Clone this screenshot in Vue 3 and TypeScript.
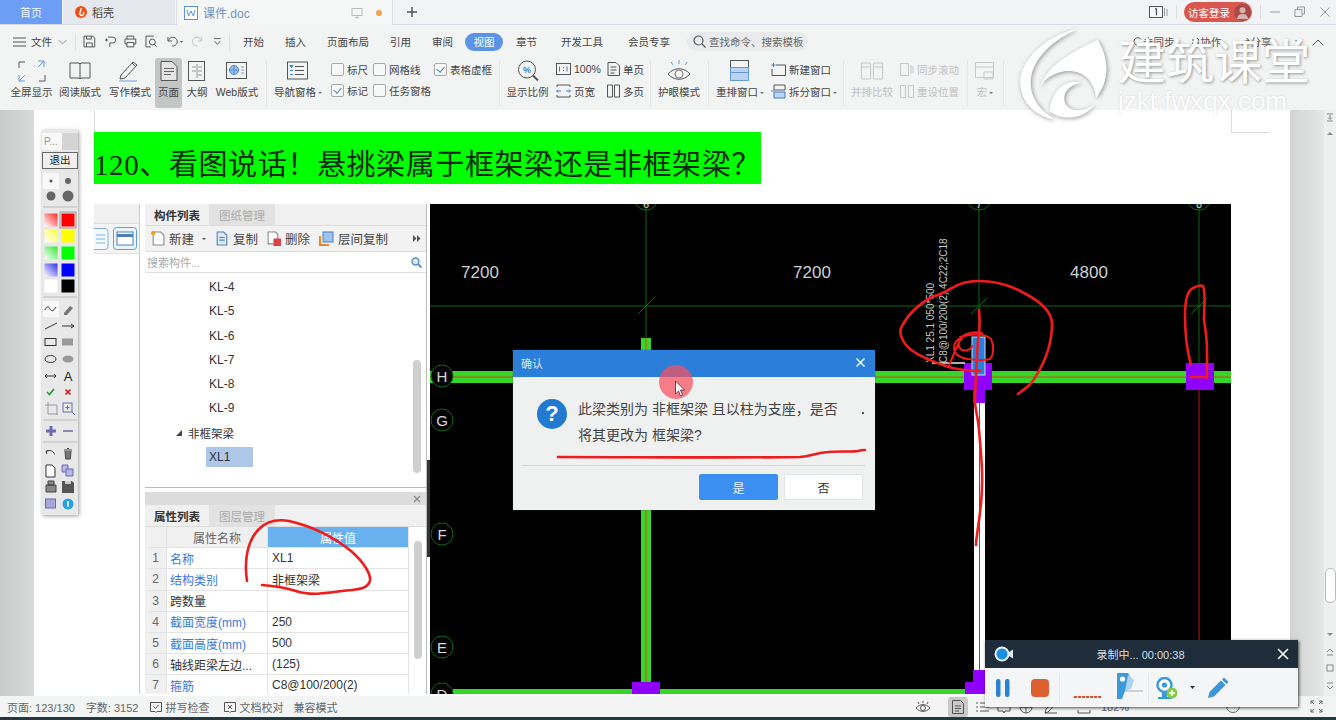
<script setup lang="ts">
// WPS 文字 + 嵌入的 CAD 截图 + 录屏工具条
const treeItems = ['KL-4', 'KL-5', 'KL-6', 'KL-7', 'KL-8', 'KL-9'];

const propRows = [
  { no: 1, name: '名称', value: 'XL1', link: true },
  { no: 2, name: '结构类别', value: '非框架梁', link: true },
  { no: 3, name: '跨数量', value: '', link: false },
  { no: 4, name: '截面宽度(mm)', value: '250', link: true },
  { no: 5, name: '截面高度(mm)', value: '500', link: true },
  { no: 6, name: '轴线距梁左边...', value: '(125)', link: false },
  { no: 7, name: '箍筋', value: 'C8@100/200(2)', link: true }
];

const menuTabs = ['开始', '插入', '页面布局', '引用', '审阅', '视图', '章节', '开发工具', '会员专享'];

const axisLabels = [
  { t: 'H', y: 376 },
  { t: 'G', y: 420 },
  { t: 'F', y: 534 },
  { t: 'E', y: 647 },
  { t: 'D', y: 694 }
];

const swatches = [
  { y: 221, a: '#ff2a2a', b: '#ff0000' },
  { y: 237, a: '#ffff40', b: '#ffff00' },
  { y: 254, a: '#30e830', b: '#00ff00' },
  { y: 271, a: '#3030e8', b: '#0000ff' }
];
</script>

<template>
  <div class="app">
    <header class="tabbar">
      <div class="tab-home">首页</div>
      <div class="tab-shell">
        <svg width="12" height="12" viewBox="0 0 12 12"><circle cx="6" cy="6" r="6" fill="#ee4d14" /><path d="M6.5 2 5 6.5a2 2 0 1 0 3-.6" fill="none" stroke="#fff" stroke-width="1.4" /></svg>
        <span>稻壳</span>
      </div>
      <div class="tab-doc">
        <svg width="14" height="14" viewBox="0 0 14 14"><rect x=".5" y=".5" width="13" height="13" fill="#fff" stroke="#5a94d8" /><path d="M3 4l1.6 6L7 5l2.4 5L11 4" fill="none" stroke="#5a94d8" /></svg>
        <span class="doc-name">课件.doc</span>
        <svg class="doc-screen" width="12" height="12" viewBox="0 0 12 12"><rect x="1" y="1.5" width="10" height="7" fill="none" stroke="#bbb" /><path d="M6 8.5v2M4 10.8h4" stroke="#bbb" /></svg>
        <i class="doc-dot"></i>
      </div>
      <div class="tab-plus">
        <svg width="12" height="12" viewBox="0 0 12 12"><path d="M6 1v10M1 6h10" stroke="#555" stroke-width="1.5" /></svg>
      </div>
      <div class="tab-right">
        <svg width="19" height="12" viewBox="0 0 19 12"><rect x=".5" y=".5" width="13" height="11" fill="#f7f7f7" stroke="#555" /><path d="M15.5 2v8M18 3v7" stroke="#999" /><path d="M6 3.2 7.4 2.4V9.4" fill="none" stroke="#333" /></svg>
        <i class="tab-sep"></i>
        <div class="login-pill">
          <span>访客登录</span>
          <svg width="17" height="17" viewBox="0 0 17 17"><circle cx="8.5" cy="8.5" r="8.5" fill="#a84a48" /><circle cx="8.5" cy="6.2" r="3" fill="#d9b3b0" /><path d="M3 15c.5-4 2.800-5 5.500-5s5 1 5.500 5" fill="#d9b3b0" /></svg>
        </div>
        <i class="tab-sep"></i>
        <svg width="12" height="12" viewBox="0 0 12 12"><path d="M1 6h10" stroke="#999" /></svg>
        <svg class="win" width="12" height="12" viewBox="0 0 12 12"><path d="M3.500 3.500V1h7v7H8M1 3.500h7v7H1z" fill="none" stroke="#999" /></svg>
        <svg class="win" width="12" height="12" viewBox="0 0 12 12"><path d="M1.500 1.500l9 9M10.500 1.500l-9 9" stroke="#999" /></svg>
      </div>
    </header>

    <section class="ribbon">
      <div class="menu-row">
        <svg class="m-burger" width="13" height="10" viewBox="0 0 13 10"><path d="M0 1h13M0 5h13M0 9h13" stroke="#555" /></svg>
        <span class="m-file">文件</span>
        <svg class="m-chev" width="9" height="6" viewBox="0 0 9 6"><path d="M.5 1l4 4 4-4" fill="none" stroke="#999" /></svg>
        <i class="m-sep"></i>
        <div class="quick">
          <svg width="13" height="13" viewBox="0 0 13 13"><path d="M1 1h9l2 2v9H1zM3.500 1v3h5V1M3.500 12V8h6v4" fill="none" stroke="#555" /></svg>
          <svg width="13" height="13" viewBox="0 0 13 13"><path d="M4 2h5a3 3 0 0 1 0 6H6v4M1 5h3M2.500 3.500v3" fill="none" stroke="#555" /></svg>
          <svg width="13" height="13" viewBox="0 0 13 13"><path d="M3 4V1h7v3M3 9H1V4h11v5h-2M3 7.500h7V12H3z" fill="none" stroke="#555" /></svg>
          <svg width="13" height="13" viewBox="0 0 13 13"><path d="M9 1H1v11h5" fill="none" stroke="#555" /><circle cx="7.500" cy="7" r="3" fill="none" stroke="#555" /><path d="M9.700 9.200 12 12" stroke="#555" /></svg>
          <svg width="18" height="13" viewBox="0 0 18 13"><path d="M2 2v4h4M2.500 6A4.500 4.500 0 1 1 6 11" fill="none" stroke="#555" /><path d="M14 6h3.500l-1.750 2z" fill="#777" /></svg>
          <svg width="13" height="13" viewBox="0 0 13 13"><path d="M11 2v4H7M10.500 6A4.500 4.500 0 1 0 7 11" fill="none" stroke="#c4c4c4" /></svg>
          <svg width="11" height="11" viewBox="0 0 11 11"><path d="M2 2.500h7M2.500 5l3 3.500 3-3.500" fill="none" stroke="#666" /></svg>
        </div>
        <i class="m-sep m-sep2"></i>
        <nav class="menu-tabs">
          <span v-for="t in menuTabs" :key="t" class="menu-tab" :class="{ active: t === '视图' }">{{ t }}</span>
        </nav>
        <div class="search-pill">
          <svg width="13" height="13" viewBox="0 0 13 13"><circle cx="5.500" cy="5.500" r="4.500" fill="none" stroke="#555" stroke-width="1.200" /><path d="M9 9l3.500 3.500" stroke="#555" stroke-width="1.200" /></svg>
          <span>查找命令、搜索模板</span>
        </div>
        <div class="share">
          <span class="share-item">
            <svg width="9" height="9" viewBox="0 0 9 9"><path d="M8 2.500A3.800 3.800 0 1 0 8 6.500" fill="none" stroke="#555" /></svg>未同步
          </span>
          <span class="share-item">
            <svg width="9" height="9" viewBox="0 0 9 9"><path d="M1 3h7M6 1l2 2M8 6H1M3 8 1 6" fill="none" stroke="#555" /></svg>协作
          </span>
          <span class="share-item">
            <svg width="9" height="9" viewBox="0 0 9 9"><path d="M1 8c.5-3 3-4.500 7-4.500M5.500 1 8 3.500 5.500 6" fill="none" stroke="#555" /></svg>分享
          </span>
          <span class="share-item">:</span>
        </div>
        <svg class="m-up" width="12" height="7" viewBox="0 0 12 7"><path d="M.5 6.500 6 1l5.500 5.500" fill="none" stroke="#555" /></svg>
      </div>

      <div class="tools-row">
        <div class="views">
          <div class="tool">
            <svg width="28" height="22" viewBox="0 0 28 22"><path d="M1 8V2h6M27 8" fill="none" stroke="#555" /><path d="M20 1h6v6M26 1l-6 6" fill="none" stroke="#5f9ae0" /><path d="M1 15v6h6M1 21l6-6" fill="none" stroke="#5f9ae0" /><path d="M27 15v6h-6" fill="none" stroke="#555" /></svg>
            <span>全屏显示</span>
          </div>
          <div class="tool">
            <svg width="22" height="18" viewBox="0 0 22 18"><path d="M1 1h9l1 1 1-1h9v15H12l-1 1-1-1H1zM11 2v14" fill="none" stroke="#555" /></svg>
            <span>阅读版式</span>
          </div>
          <div class="tool">
            <svg width="24" height="22" viewBox="0 0 24 22"><path d="M3 15 15 2l4 3-12 13-5 1z" fill="none" stroke="#555" /><path d="M14 3l4 4" stroke="#555" /><path d="M1 21h18" stroke="#6b9ee0" /></svg>
            <span>写作模式</span>
          </div>
          <div class="tool tool-active">
            <svg width="18" height="21" viewBox="0 0 18 21"><path d="M1 1h11l5 5v14H1z" fill="#e4e4e4" stroke="#555" /><path d="M4 8h10M4 11h10M4 14h7" stroke="#666" /></svg>
            <span>页面</span>
          </div>
          <div class="tool">
            <svg width="18" height="20" viewBox="0 0 18 20"><rect x=".5" y=".5" width="16" height="19" fill="none" stroke="#555" /><path d="M9 3v14M4 6h4M10 6h4M4 10h4M10 10h4M10 14h4" stroke="#999" /></svg>
            <span>大纲</span>
          </div>
          <div class="tool">
            <svg width="22" height="18" viewBox="0 0 22 18"><rect x=".5" y=".5" width="20" height="16" fill="none" stroke="#555" /><circle cx="8" cy="8" r="4.500" fill="#9dbde8" stroke="#4a86d4" /><path d="M3.500 8h9M8 3.500v9M15 5h3M15 8h3M15 11h3" stroke="#4a86d4" stroke-width=".8" /></svg>
            <span>Web版式</span>
          </div>
        </div>
        <i class="r-sep r-sep-views"></i>
        <div class="tool nav-tool">
          <svg width="22" height="19" viewBox="0 0 22 19"><rect x=".5" y=".5" width="20" height="17" fill="none" stroke="#555" /><path d="M8 5h9M8 9h9M8 13h9" stroke="#555" /><path d="M3 4h3L4.500 6zM3 9h3M3 13h3" stroke="#3c7fd0" fill="#3c7fd0" /></svg>
          <span>导航窗格<b class="caret"></b></span>
        </div>
        <div class="checks">
          <label class="chk"><i class="box"></i>标尺</label>
          <label class="chk"><i class="box"></i>网格线</label>
          <label class="chk"><i class="box on"></i>表格虚框</label>
          <label class="chk"><i class="box on"></i>标记</label>
          <label class="chk"><i class="box"></i>任务窗格</label>
          <span></span>
        </div>
        <i class="r-sep"></i>
        <div class="tool zoom-tool">
          <svg width="22" height="23" viewBox="0 0 22 23"><circle cx="10" cy="10" r="8.500" fill="none" stroke="#555" /><path d="M16 16l5 5" stroke="#555" stroke-width="2" /><text x="10" y="13" class="pct">%</text></svg>
          <span>显示比例</span>
        </div>
        <div class="mini zoom-mini">
          <div class="mini-item">
            <svg width="15" height="12" viewBox="0 0 15 12"><rect x=".5" y=".5" width="14" height="11" fill="none" stroke="#555" /><path d="M3.500 3.500v5M7.500 4v1M7.500 7v1M11 3.500v5" stroke="#3c7fd0" /></svg>
            <span>100%</span>
          </div>
          <div class="mini-item">
            <svg width="13" height="14" viewBox="0 0 13 14"><path d="M1 .5h8l3.500 3.500v9.500H1zM3.500 5h6M3.500 8h6M3.500 11h4" fill="none" stroke="#555" /></svg>
            <span>单页</span>
          </div>
          <div class="mini-item">
            <svg width="15" height="14" viewBox="0 0 15 14"><path d="M1 3V1h13v2M1 11v2h13v-2" fill="none" stroke="#555" /><path d="M1 7h4M14 7h-4M2 5.500 .5 7 2 8.500M13 5.500 14.500 7 13 8.500" fill="none" stroke="#3c7fd0" /></svg>
            <span>页宽</span>
          </div>
          <div class="mini-item">
            <svg width="13" height="14" viewBox="0 0 13 14"><path d="M.5 1h5v12h-5zM7.500 1h5v12h-5z" fill="none" stroke="#555" /></svg>
            <span>多页</span>
          </div>
        </div>
        <i class="r-sep"></i>
        <div class="tool eye-tool">
          <svg width="24" height="24" viewBox="0 0 24 24"><path d="M1 15c6-7 16-7 22 0-6 7-16 7-22 0z" fill="none" stroke="#555" /><circle cx="12" cy="15" r="4" fill="none" stroke="#777" /><path d="M12 1v4M4 3l2 3M20 3l-2 3" stroke="#5f9ae0" /></svg>
          <span>护眼模式</span>
        </div>
        <i class="r-sep r-sep-eye"></i>
        <div class="tool order-tool">
          <svg width="20" height="22" viewBox="0 0 20 22"><rect x=".5" y=".5" width="18" height="7" fill="none" stroke="#555" /><rect x=".5" y="7.500" width="18" height="5" fill="#bcd3f0" stroke="#5f9ae0" /><rect x=".5" y="12.500" width="18" height="8" fill="#bcd3f0" stroke="#5f9ae0" /></svg>
          <span>重排窗口<b class="caret"></b></span>
        </div>
        <div class="mini win-mini">
          <div class="mini-item">
            <svg width="15" height="13" viewBox="0 0 15 13"><path d="M5 2h9.500v10.500H1V6" fill="none" stroke="#555" /><path d="M2.500 0v4M.5 2h4" stroke="#3c7fd0" /></svg>
            <span>新建窗口</span>
          </div>
          <div class="mini-item">
            <svg width="15" height="15" viewBox="0 0 15 15"><path d="M3 1h11v5H3z" fill="none" stroke="#555" /><path d="M3 8h11v6H3z" fill="#bcd3f0" stroke="#3c7fd0" /><path d="M0 7h3" stroke="#3c7fd0" /></svg>
            <span>拆分窗口<b class="caret"></b></span>
          </div>
        </div>
        <i class="r-sep"></i>
        <div class="tool off compare-tool">
          <svg width="22" height="18" viewBox="0 0 22 18"><path d="M.5 1h9v16h-9zM12.500 1h9v16h-9zM.5 5h9M12.500 5h9" fill="none" stroke="#c8c8c8" /></svg>
          <span>并排比较</span>
        </div>
        <div class="mini off sync-mini">
          <div class="mini-item">
            <svg width="14" height="13" viewBox="0 0 14 13"><path d="M.5.500h8v12h-8zM11 2v9M13 3v7" fill="none" stroke="#c8c8c8" /></svg>
            <span>同步滚动</span>
          </div>
          <div class="mini-item">
            <svg width="14" height="13" viewBox="0 0 14 13"><path d="M.5.500h5v12h-5zM8.500.500h5v12h-5z" fill="none" stroke="#c8c8c8" /></svg>
            <span>重设位置</span>
          </div>
        </div>
        <i class="r-sep"></i>
        <div class="tool off macro-tool">
          <svg width="20" height="18" viewBox="0 0 20 18"><path d="M.5.500h18v15H.5zM.5 5h18M9 10h9v7H9z" fill="#f4f5f5" stroke="#c8c8c8" /></svg>
          <span>宏<b class="caret"></b></span>
        </div>
        <i class="r-sep r-sep-macro"></i>
      </div>
    </section>

    <main class="workspace">
      <div class="gutter"></div>
      <div class="page">
        <div class="crop-marks">
          <i class="crop-left"></i>
          <i class="crop-right"></i>
        </div>
        <h1 class="heading">120、看图说话！悬挑梁属于框架梁还是非框架梁？</h1>
        <div class="shot">
          <div class="sliver">
            <div class="sliver-head"></div>
            <div class="sliver-btns">
              <svg width="15" height="22" viewBox="0 0 15 22"><rect x="-6" y=".5" width="20" height="21" rx="3" fill="#f4f8fd" stroke="#7db0e8" /><path d="M2 7h9M2 11h9M2 15h9" stroke="#7db0e8" /></svg>
              <svg width="24" height="23" viewBox="0 0 24 23"><rect x=".5" y=".5" width="23" height="22" rx="3" fill="#eaf3fc" stroke="#5d9de0" /><rect x="4" y="5" width="16" height="13" fill="#fff" stroke="#4c7fb8" /><path d="M4 8.500h16" stroke="#4c7fb8" stroke-width="3" /></svg>
            </div>
          </div>
          <div class="panels">
            <div class="panel-list">
              <div class="sub-tabs">
                <span class="sub-tab active">构件列表</span>
                <span class="sub-tab">图纸管理</span>
              </div>
              <div class="list-toolbar">
                <span class="lt-item">
                  <svg width="14" height="15" viewBox="0 0 13 14"><path d="M2 1h7l3 3v9H2z" fill="#fff" stroke="#888" /><circle cx="2" cy="2" r="2" fill="#e8a030" /></svg>新建<b class="caret dark"></b>
                </span>
                <span class="lt-item">
                  <svg width="14" height="15" viewBox="0 0 13 14"><path d="M2 1h6l3 3v9H2z" fill="#dce9f8" stroke="#4a80bd" /><path d="M4 6h5M4 8.500h5" stroke="#4a80bd" /></svg>复制
                </span>
                <span class="lt-item">
                  <svg width="14" height="15" viewBox="0 0 13 14"><path d="M1 1h7l2 2v9H1z" fill="#fff" stroke="#888" /><rect x="6" y="7" width="7" height="7" fill="#d8434a" /></svg>删除
                </span>
                <span class="lt-item">
                  <svg width="15" height="15" viewBox="0 0 15 15"><path d="M1 5v9h9" fill="none" stroke="#e8862a" stroke-width="2" /><rect x="4" y="1" width="10" height="10" fill="#9dc3ee" stroke="#4a80bd" /></svg>层间复制
                </span>
                <svg class="lt-more" width="8" height="7" viewBox="0 0 8 7"><path d="M0 0l3.500 3.500L0 7zM4 0l3.500 3.500L4 7z" fill="#555" /></svg>
              </div>
              <div class="list-search">
                <span>搜索构件...</span>
                <svg width="11" height="11" viewBox="0 0 11 11"><circle cx="4.500" cy="4.500" r="3.500" fill="#d8e8f8" stroke="#5d8fc4" stroke-width="1.400" /><path d="M7 7l3.500 3.500" stroke="#5d8fc4" stroke-width="1.800" /></svg>
              </div>
              <div class="tree">
                <div v-for="item in treeItems" :key="item" class="tree-leaf">{{ item }}</div>
                <div class="tree-group"><svg width="6" height="6" viewBox="0 0 6 6"><path d="M6 0v6H0z" fill="#444" /></svg>非框架梁</div>
                <div class="tree-leaf selected">XL1</div>
                <i class="tree-scroll"></i>
              </div>
            </div>
            <div class="panel-props">
              <div class="props-head">
                <svg width="8" height="8" viewBox="0 0 8 8"><path d="M1 1l6 6M7 1 1 7" stroke="#888" stroke-width="1.300" /></svg>
              </div>
              <div class="sub-tabs">
                <span class="sub-tab active">属性列表</span>
                <span class="sub-tab">图层管理</span>
              </div>
              <div class="prop-table">
                <div class="cell head"></div>
                <div class="cell head">属性名称</div>
                <div class="cell head value-head">属性值</div>
                <template v-for="r in propRows" :key="r.no">
                  <div class="cell num">{{ r.no }}</div>
                  <div class="cell name" :class="{ link: r.link }">{{ r.name }}</div>
                  <div class="cell val">{{ r.value }}</div>
                </template>
                <i class="prop-scroll"></i>
              </div>
            </div>
          </div>
          <i class="panel-splitter"></i>
          <svg class="cad" width="801" height="490" viewBox="430 204 801 490">
            <rect x="430" y="204" width="801" height="490" fill="#000" />
            <g stroke="#0f6a12" fill="none">
              <path d="M646 204v134M979 204v160M1199 204v160M430 306h801" />
              <circle cx="646" cy="198" r="12" />
              <circle cx="979" cy="198" r="12" />
              <circle cx="1199" cy="198" r="12" />
              <path d="M638 314l16-16M971 314l16-16M1191 314l16-16" />
            </g>
            <g class="cad-axis-top">
              <text x="646" y="208">6</text>
              <text x="979" y="208">7</text>
              <text x="1199" y="208">8</text>
            </g>
            <rect x="641" y="338" width="10" height="350" fill="#35d52a" />
            <path d="M646 338v350" stroke="#a07a18" stroke-width="1.500" />
            <rect x="430" y="371" width="801" height="12" fill="#35d52a" />
            <path d="M430 377h801" stroke="#8f7a1c" stroke-width="1.500" />
            <rect x="453" y="689" width="522" height="5" fill="#35d52a" />
            <g v-for="a in axisLabels" :key="a.t">
              <circle cx="442" :cy="a.y" r="11" fill="#000" stroke="#0f6a12" />
              <text class="cad-axis" x="442" :y="a.y + 6">{{ a.t }}</text>
            </g>
            <rect x="974" y="403" width="11" height="291" fill="#fff" />
            <path d="M979.500 403v291" stroke="#e02020" />
            <path d="M1199 390v304" stroke="#7a1010" stroke-width="1.500" />
            <path d="M964 363h28v27h-7v13h-12v-13h-9zM1186 363h28v27h-28zM632 682h28v12h-28zM965 682h8v-12h12v24h-20z" fill="#8f00ff" />
            <rect x="972" y="337" width="13" height="38" fill="#2a7fe0" stroke="#d8d8f0" />
            <path d="M932 363h33" stroke="#e8e8e8" stroke-width="1.500" />
            <text class="cad-dim" x="480" y="278">7200</text>
            <text class="cad-dim" x="812" y="278">7200</text>
            <text class="cad-dim" x="1089" y="278">4800</text>
            <text class="cad-note" transform="translate(934 363) rotate(-90)">XL1 25.1 050*500</text>
            <text class="cad-note" transform="translate(947 363) rotate(-90)">C8@100/200(2) 4C22;2C18</text>
          </svg>
        </div>
      </div>
      <aside class="side">
        <div class="side-shade"></div>
        <div class="vscroll">
          <svg width="8" height="30" viewBox="0 0 8 30"><path d="M1 1h6M4 2v4M2 4.500l2 2 2-2M1 8h6" stroke="#888" fill="none" /><path d="M1 22h6L4 19z" fill="#888" /></svg>
          <i class="vthumb"></i>
          <svg width="8" height="60" viewBox="0 0 8 60"><path d="M1 2h6L4 5z" fill="#888" /><path d="M1 21l3-3 3 3M1 24h6" stroke="#888" fill="none" /><rect x="1" y="34" width="6" height="6" fill="none" stroke="#888" /><path d="M1 52h6M1 55l3 3 3-3" stroke="#888" fill="none" /></svg>
        </div>
      </aside>
    </main>

    <footer class="statusbar">
      <span class="st-page">页面: 123/130</span>
      <span class="st-words">字数: 3152</span>
      <span class="st-check">
        <svg width="12" height="12" viewBox="0 0 12 12"><path d="M.5 1.500h11v9H7l-1 1-1-1H.5zM3.500 5.500 5.500 7.500l3-3.500" fill="none" stroke="#555" /></svg>拼写检查
      </span>
      <span class="st-check st-proof">
        <svg width="12" height="12" viewBox="0 0 12 12"><path d="M.5 1.500h11v9H7l-1 1-1-1H.5zM4 4l4 4M8 4 4 8" fill="none" stroke="#555" /></svg>文档校对
      </span>
      <span class="st-compat">兼容模式</span>
      <div class="st-right">
        <svg width="16" height="14" viewBox="0 0 16 14"><path d="M1 8c4-4.500 10-4.500 14 0-4 4.500-10 4.500-14 0z" fill="none" stroke="#555" /><circle cx="8" cy="8" r="2.500" fill="none" stroke="#555" /><path d="M8 1v2M3 2l1 2M13 2l-1 2" stroke="#555" /></svg>
        <span class="st-page-btn"><svg width="12" height="14" viewBox="0 0 12 14"><path d="M.5.500h8l3 3v10H.5zM3 6h6M3 8.500h6M3 11h4" fill="none" stroke="#555" /></svg></span>
        <svg class="st-list" width="13" height="12" viewBox="0 0 13 12"><path d="M0 2h2M4 2h9M0 6h2M4 6h9M0 10h2M4 10h9" stroke="#555" /></svg>
        <svg width="14" height="14" viewBox="0 0 14 14"><path d="M1 2h5l1 1 1-1h5v9H8l-1 2-1-2H1z" fill="none" stroke="#555" /></svg>
        <svg width="14" height="14" viewBox="0 0 14 14"><circle cx="7" cy="7" r="6" fill="none" stroke="#555" /><path d="M1 7h12M7 1v12" stroke="#555" /></svg>
        <svg class="st-pen" width="14" height="14" viewBox="0 0 14 14"><path d="M1 13l1-4 8-7 2 2-8 8zM1 13h12" fill="none" stroke="#555" /></svg>
        <svg class="st-crop" width="14" height="14" viewBox="0 0 14 14"><path d="M1 4V1h12v3M1 10v3h12v-3" fill="none" stroke="#555" /></svg>
        <span class="st-zoom">182%</span>
      </div>
      <span class="st-circle"></span>
      <svg class="st-full" width="13" height="13" viewBox="0 0 13 13"><path d="M1 4V1h3M9 1h3v3M1 9v3h3M12 9v3H9M1 1l3 3M12 1 9 4M1 12l3-3M12 12 9 9" fill="none" stroke="#666" /></svg>
    </footer>
    <div class="edge"></div>

    <!-- 浮层 -->
    <div class="pen-bar">
      <div class="pen-title"><span>P...</span><i></i></div>
      <div class="pen-exit">退出</div>
      <svg width="36" height="344" viewBox="42 172 36 344">
        <rect x="43" y="174" width="16" height="16" fill="#f8f8f8" />
        <circle cx="51" cy="182" r="1.500" fill="#555" />
        <circle cx="68" cy="182" r="3" fill="#666" />
        <circle cx="51" cy="197" r="4.500" fill="#666" />
        <circle cx="68" cy="197" r="5.500" fill="#666" />
        <path d="M43 208h34M43 298h34M43 421h34M43 443h34" stroke="#bbb" />
        <defs>
          <linearGradient v-for="(s, i) in swatches" :id="'sw' + i" :key="s.y" x1="1" y1="0" x2="0" y2="1">
            <stop offset="0" :stop-color="s.a" />
            <stop offset="1" stop-color="#fff" />
          </linearGradient>
        </defs>
        <g v-for="(s, i) in swatches" :key="s.y">
          <rect x="44.500" :y="s.y - 6.500" width="13" height="13" :fill="`url(#sw${i})`" />
          <rect x="61.500" :y="s.y - 6.500" width="13" height="13" :fill="s.b" />
        </g>
        <rect x="60" y="213" width="16" height="16" fill="none" stroke="#999" />
        <rect x="44.500" y="280.500" width="13" height="13" fill="#fff" />
        <rect x="61.500" y="280.500" width="13" height="13" fill="#000" />
        <rect x="43" y="302" width="16" height="16" fill="#f8f8f8" />
        <path d="M45 311c2-5 4-3 5-1s3 3 6-2" fill="none" stroke="#333" />
        <path d="M64 314l6-7 3 2-6 7h-3z" fill="#777" />
        <path d="M45 330l12-6" stroke="#333" />
        <path d="M62 327h12M71 325l3 2-3 2" fill="none" stroke="#333" />
        <rect x="45" y="339.500" width="11" height="7" fill="none" stroke="#333" />
        <rect x="62" y="339.500" width="11" height="7" fill="#999" />
        <ellipse cx="50.500" cy="360" rx="5.500" ry="3.500" fill="none" stroke="#333" />
        <ellipse cx="68" cy="360" rx="5.500" ry="3.500" fill="#999" />
        <path d="M45 377h11M47 375l-2 2 2 2M54 375l2 2-2 2" fill="none" stroke="#333" />
        <text x="68" y="382" class="pen-a">A</text>
        <path d="M47 393l2.500 2.500L54 390" fill="none" stroke="#1b9a2a" stroke-width="1.600" />
        <path d="M65.500 390.500l5 5M70.500 390.500l-5 5" stroke="#d01818" stroke-width="1.600" />
        <path d="M45 406h12v10M48 403v12h10" fill="none" stroke="#999" />
        <rect x="63" y="404" width="9" height="9" fill="none" stroke="#6a6ab0" />
        <path d="M65.500 408.500h4M67.500 406.500v4M72 413l3 3" stroke="#6a6ab0" />
        <path d="M51 427v10M46 432h10" stroke="#6a6ab0" stroke-width="3" />
        <path d="M63 432h10" stroke="#8a8ab8" stroke-width="2" />
        <path d="M47 455l-1-3 3-.5M46.500 452.500c3-2 7-1 8 3" fill="none" stroke="#444" />
        <path d="M64 451h8M65 452l.7 8h4.600l.7-8M67 449.500h2" fill="#777" stroke="#444" />
        <path d="M46 466h6l3 3v9h-9z" fill="#fff" stroke="#333" />
        <path d="M62 466h6v7h-6z" fill="#b6b6e0" stroke="#6a6ab0" /><path d="M66 470h7v7h-7z" fill="#b6b6e0" stroke="#6a6ab0" />
        <path d="M46 486h10v7H46zM48 482h6v4h-6z" fill="#888" stroke="#444" />
        <path d="M62 482h10l2 2v10H62z" fill="#555" /><rect x="65" y="482" width="6" height="3" fill="#ccc" />
        <rect x="45.500" y="500" width="10" height="9" fill="#a8a8d8" stroke="#6a6ab0" />
        <circle cx="68" cy="505" r="5.500" fill="#2aa0e0" /><path d="M68 502v6" stroke="#fff" stroke-width="1.400" />
      </svg>
    </div>

    <div class="watermark">
      <svg class="wm-logo" width="97" height="93" viewBox="160 90 290 280">
        <path d="M345 92C250 110 165 190 172 260c4 55 43 95 103 105-50-30-80-75-70-130 10-55 65-110 140-143z" fill="#fff" />
        <path d="M405 125c-55 25-165 80-173 145 8-30 58-55 98-50 40 5 65 35 70 80 30-35 50-100 5-175z" fill="#fff" />
        <path d="M260 340c5-60 50-100 95-85-35 5-55 30-50 55 10 35 55 35 90 10-25 40-95 55-135 20z" fill="#fff" />
      </svg>
      <div class="wm-text">
        <div class="wm-cn">建筑课堂</div>
        <div class="wm-en">jzkt.fwxqx.com</div>
      </div>
    </div>

    <div class="dialog">
      <div class="dialog-head">
        <span>确认</span>
        <svg width="9" height="9" viewBox="0 0 9 9"><path d="M.5.500l8 8M8.500.500l-8 8" stroke="#fff" stroke-width="1.400" /></svg>
      </div>
      <div class="dialog-body">
        <div class="q-icon">?</div>
        <div class="dialog-msg">
          <p>此梁类别为 非框架梁 且以柱为支座，是否</p>
          <p>将其更改为 框架梁?</p>
        </div>
        <i class="stray-dot"></i>
      </div>
      <div class="dialog-foot">
        <button class="btn-yes">是</button>
        <button class="btn-no">否</button>
      </div>
    </div>

    <svg class="ink" width="1336" height="720" viewBox="0 0 1336 720">
      <circle cx="676" cy="382" r="17" fill="#f85060" fill-opacity=".72" />
      <path d="M675.500 381v13l3-3 2 5 2-1-2-5h4z" fill="#fff" stroke="#333" stroke-width=".8" />
      <g fill="none" stroke="#ee1c1c" stroke-width="2.600" stroke-linecap="round" stroke-linejoin="round">
        <path d="M558 457c60 0 180 1 242 0 12-1 14-4 28-5 10-1 26 0 30-1 3-1 5-1 7-1" />
        <path d="M247 581c-3-20 0-40 12-52 8-8 18-10 30-8 22 5 42 14 62 30 14 12 20 24 19 30-3 8-10 8-28 10-14 2-32 5-46 0-12-4-20-5-34-6" />
        <path d="M1018 394c8-6 14-10 18-18 10-16 16-34 16-52 0-14-14-24-30-32-14-8-28-11-44-11-10 0-18 2-26 7-8 4-12 7-18 8-10 5-24 15-32 30-4 6 0 16 8 23 10 8 26 14 42 19 10 2 20 3 28 3" />
        <path d="M979 310c1 10 1 20-1 30-1 14-2 30-3 60 0 10 3 16 4 30 2 24 4 40 3 55 0 25-6 50-6 60" />
        <path d="M949 366c3-8 7-18 12-28 3-5 14-7 21-5M962 338c-4 1-8 4-8 10 0 6 6 10 14 11 8 1 15 2 22 0 4-4 4-14 1-20-4-4-13-5-22-4-3 1-5 1-9 2M962 339c-5 3-4 9 0 11 4 1 9 0 10-4" stroke-width="2" />
        <path d="M1191 365c-4-14-6-34-6-50 0-14 2-24 8-27 4-2 8-3 10-2 3 6 1 20 1 34 2 12 3 20 3 30v28M1191 377h14" />
      </g>
    </svg>

    <div class="recorder">
      <div class="rec-head">
        <svg class="rec-cam" width="20" height="16" viewBox="0 0 20 16"><circle cx="8" cy="8" r="7.500" fill="#e8f4fc" /><circle cx="8" cy="8" r="5.500" fill="#1c8fe0" /><path d="M15 6l4-2.500v9L15 10z" fill="#d8ecf8" /></svg>
        <span class="rec-time">录制中... 00:00:38</span>
        <svg width="12" height="12" viewBox="0 0 12 12"><path d="M1 1l10 10M11 1 1 11" stroke="#fff" stroke-width="1.600" /></svg>
      </div>
      <div class="rec-body">
        <svg width="14" height="18" viewBox="0 0 14 18"><rect x="0" y="0" width="4.500" height="18" rx="2" fill="#2a82d0" /><rect x="9" y="0" width="4.500" height="18" rx="2" fill="#2a82d0" /></svg>
        <i class="rec-stop"></i>
        <i class="rec-div"></i>
        <svg class="rec-line" width="27" height="4" viewBox="0 0 27 4"><path d="M0 2h27" stroke="#d8502a" stroke-width="2.200" stroke-dasharray="3 1" /></svg>
        <svg class="rec-mark" width="28" height="28" viewBox="0 0 28 28"><path d="M1 1h11l3 5v9l-6 4-3 8H1z" fill="#3c9ad8" /><path d="M12 3l6 5-3 9-6 2z" fill="#a8d4f0" /><circle cx="6.500" cy="7" r="2.600" fill="#fff" /><path d="M9 19h18" stroke="#999" stroke-width=".8" /></svg>
        <i class="rec-div"></i>
        <svg class="rec-web" width="22" height="22" viewBox="0 0 22 22"><circle cx="8.500" cy="8" r="7" fill="#fff" stroke="#3c9ad8" stroke-width="2.500" /><circle cx="8.500" cy="8" r="2.600" fill="#3c9ad8" /><path d="M2 20h14v2H2zM6 15h5v5H6z" fill="#3c9ad8" /><circle cx="16" cy="16" r="5.500" fill="#86c84a" /><path d="M16 13v6M13 16h6" stroke="#fff" stroke-width="1.400" /></svg>
        <svg class="rec-caret" width="5" height="3" viewBox="0 0 5 3"><path d="M0 0h5L2.500 3z" fill="#333" /></svg>
        <svg class="rec-pen" width="22" height="22" viewBox="0 0 22 22"><path d="M1 21l1.500-6L14 3.500l4.500 4.500L7 19.500z" fill="#3a96d8" /><path d="M15 2.500l2-2 4.500 4.500-2 2z" fill="#3a96d8" /></svg>
      </div>
    </div>
  </div>
</template>

<style scoped>
.app {
  position: relative;
  width: 1336px;
  height: 720px;
  overflow: hidden;
  display: flex;
  flex-direction: column;
  font-family: "Liberation Sans", "Noto Sans CJK SC", sans-serif;
  color: #444;
  font-size: 11px;
}

/* ---- 标签栏 ---- */
.tabbar {
  height: 25px;
  flex: none;
  display: flex;
  align-items: stretch;
  background: #f1f3f5;
  border-bottom: 1px solid #d8dae2;
  box-sizing: border-box;
}
.tab-home {
  width: 62px;
  background: #6c9ef5;
  color: #f0f5ff;
  font-size: 11px;
  display: flex;
  align-items: center;
  justify-content: center;
}
.tab-shell {
  width: 112px;
  margin-left: 1px;
  background: #e5e8ed;
  display: flex;
  align-items: center;
  gap: 5px;
  padding-left: 12px;
  box-sizing: border-box;
}
.tab-doc {
  width: 217px;
  margin-left: 1px;
  margin-bottom: -1px;
  background: #f5f6f6;
  border-left: 1px solid #dcdee4;
  border-right: 1px solid #dcdee4;
  display: flex;
  align-items: center;
  padding-left: 7px;
  box-sizing: border-box;
}
.doc-name {
  margin-left: 5px;
  color: #6f94c2;
  font-size: 12px;
}
.doc-screen {
  margin-left: auto;
}
.doc-dot {
  width: 6px;
  height: 6px;
  border-radius: 50%;
  background: #f0a050;
  margin: 0 10px 0 13px;
}
.tab-plus {
  width: 38px;
  display: flex;
  align-items: center;
  justify-content: center;
}
.tab-right {
  margin-left: auto;
  display: flex;
  align-items: center;
}
.tab-sep {
  width: 1px;
  height: 14px;
  background: #ddd;
  margin: 0 8px;
}
.tab-sep:nth-of-type(1) {
  margin-right: 7px;
}
.login-pill {
  width: 68px;
  height: 20px;
  border-radius: 10px;
  background: #d9574f;
  color: #fff;
  font-size: 10.5px;
  display: flex;
  align-items: center;
  justify-content: space-between;
  padding: 0 1px 0 4px;
  box-sizing: border-box;
}
.win {
  margin-left: 13px;
}
.tab-right .win:last-child {
  margin: 0 5px 0 13px;
}

/* ---- 功能区 ---- */
.ribbon {
  height: 85px;
  flex: none;
  background: #f2f3f3;
  box-sizing: border-box;
}
.menu-row {
  height: 33px;
  display: flex;
  align-items: center;
  padding-left: 13px;
  box-sizing: border-box;
  font-size: 10.5px;
}
.m-file {
  margin-left: 5px;
}
.m-chev {
  margin-left: 6px;
}
.m-sep {
  width: 1px;
  height: 18px;
  background: #e2e2e2;
  margin-left: 8px;
}
.m-sep2 {
  margin-left: 6px;
}
.quick {
  width: 140px;
  margin-left: 7px;
  display: flex;
  align-items: center;
  gap: 8px;
}
.menu-tabs {
  display: flex;
  align-items: center;
  margin-left: 13px;
}
.menu-tab {
  margin-right: 21px;
  white-space: nowrap;
}
.menu-tab:nth-child(7) {
  margin-right: 24px;
}
.menu-tab:nth-child(8) {
  margin-right: 25px;
}
.menu-tab.active {
  background: #5b93e6;
  color: #fff;
  height: 18px;
  line-height: 18px;
  width: 38px;
  text-align: center;
  border-radius: 9px;
  margin: 0 13px 0 -9px;
}
.search-pill {
  width: 121px;
  height: 19px;
  margin-left: -4px;
  border-radius: 10px;
  background: #e8eaeb;
  display: flex;
  align-items: center;
  gap: 3px;
  padding-left: 6px;
  box-sizing: border-box;
  color: #666;
  white-space: nowrap;
}
.share {
  margin-left: 325px;
  display: flex;
  color: #555;
  font-size: 10.5px;
  white-space: nowrap;
}
.share-item {
  display: flex;
  align-items: center;
  gap: 1px;
  margin-left: 16px;
}
.share-item:first-child {
  margin-left: 0;
}
.share-item:nth-child(3) {
  margin-left: 19px;
}
.share-item:nth-child(4) {
  margin-left: 23px;
}
.m-up {
  position: absolute;
  left: 1312px;
  top: 39px;
}
.tools-row {
  height: 52px;
  display: flex;
  padding-left: 8px;
}
.views {
  display: grid;
  grid-template-columns: 47px 50px 50px 27px 30px 50px;
}
.tool {
  height: 50px;
  display: flex;
  flex-direction: column;
  align-items: center;
  font-size: 10.5px;
  white-space: nowrap;
}
.tool > svg {
  height: 24px;
  margin-top: 1px;
  flex: none;
}
.tool > span {
  margin-top: 1px;
  line-height: 16px;
}
.tool-active {
  background: #c4c5c5;
  border-radius: 3px;
}
.off {
  color: #c0c0c0;
}
.caret {
  display: inline-block;
  margin-left: 2px;
  vertical-align: middle;
  border: 2.5px solid transparent;
  border-top-color: #777;
  border-bottom: 0;
}
.caret.dark {
  border-top-color: #555;
  margin-left: 4px;
}
.r-sep {
  width: 1px;
  height: 46px;
  background: #e6e6e6;
  margin-top: 2px;
  flex: none;
}
.r-sep-views {
  margin-left: 4px;
}
.nav-tool {
  width: 56px;
  margin-left: 3px;
}
.checks {
  width: 168px;
  margin-left: 5px;
  display: grid;
  grid-template-columns: 42px 61px 65px;
  grid-auto-rows: 21px;
  padding-top: 1px;
  box-sizing: border-box;
  font-size: 10.5px;
}
.chk {
  display: flex;
  align-items: center;
  gap: 3px;
  white-space: nowrap;
}
.box {
  width: 11px;
  height: 11px;
  border: 1px solid #aaa;
  border-radius: 2px;
  background: #f8f8f8;
  position: relative;
}
.box.on::after {
  content: "";
  position: absolute;
  left: 2.500px;
  top: 1px;
  width: 4px;
  height: 6px;
  border: solid #4a80c8;
  border-width: 0 1.500px 1.500px 0;
  transform: rotate(40deg);
}
.zoom-tool {
  width: 41px;
  margin-left: 7px;
}
.pct {
  font-size: 9px;
  text-anchor: middle;
  fill: #3c7fd0;
  font-weight: bold;
}
.mini {
  display: grid;
  grid-auto-rows: 22px;
  font-size: 10.5px;
  white-space: nowrap;
}
.mini-item {
  display: flex;
  align-items: center;
  gap: 3px;
}
.zoom-mini {
  width: 94px;
  margin-left: 8px;
  grid-template-columns: 51px 43px;
}
.eye-tool {
  width: 42px;
  margin-left: 7px;
}
.r-sep-eye {
  margin-left: 8px;
}
.order-tool {
  width: 50px;
  margin-left: 6px;
}
.win-mini {
  width: 72px;
  margin-left: 6px;
}
.compare-tool {
  width: 42px;
  margin-left: 7px;
}
.sync-mini {
  width: 67px;
  margin-left: 7px;
}
.macro-tool {
  width: 20px;
  margin-left: 7px;
}
.r-sep-macro {
  margin-left: 8px;
}

/* ---- 文档区 ---- */
.workspace {
  flex: 1;
  min-height: 0;
  display: flex;
  background: #cacbcb;
}
.gutter {
  width: 34px;
  flex: none;
  background: linear-gradient(90deg, #c9caca, #d8d9d9);
}
.page {
  width: 1256px;
  flex: none;
  background: #fff;
  position: relative;
  padding: 22px 0 0 60px;
  box-sizing: border-box;
  overflow: hidden;
}
.crop-left {
  position: absolute;
  left: 60px;
  top: 0;
  width: 1px;
  height: 22px;
  background: #ddd;
}
.crop-right {
  position: absolute;
  left: 1197px;
  top: 0;
  width: 37px;
  height: 22px;
  border-left: 1px solid #ddd;
  border-bottom: 1px solid #ddd;
}
.heading {
  margin: 0;
  width: 667px;
  height: 52px;
  line-height: 66px;
  background: #00ff00;
  color: #0c2a0c;
  font-family: "Liberation Serif", "Noto Sans CJK SC", serif;
  font-weight: 400;
  font-size: 29px;
  letter-spacing: 0.6px;
  white-space: nowrap;
  overflow: hidden;
}
.shot {
  margin-top: 20px;
  width: 1137px;
  height: 490px;
  display: flex;
  position: relative;
}
.sliver {
  width: 46px;
  flex: none;
  border-right: 1px solid #ccc;
  margin-right: 5px;
  box-sizing: border-box;
}
.sliver-head {
  height: 20px;
  background: #f0f0f0;
  border-bottom: 1px solid #ddd;
  box-sizing: border-box;
}
.sliver-btns {
  display: flex;
  align-items: center;
  gap: 4px;
  padding: 3px 0;
  border-bottom: 1px solid #e4e4e4;
  background: #f4f4f4;
}
.panels {
  width: 282px;
  flex: none;
  display: flex;
  flex-direction: column;
  border-right: 1px solid #bbb;
  box-sizing: border-box;
}
.panel-list {
  height: 284px;
  flex: none;
  border-bottom: 1px solid #bbb;
  box-sizing: border-box;
}
.sub-tabs {
  height: 22px;
  display: flex;
  background: #f0f0f0;
  border-bottom: 1px solid #ddd;
  box-sizing: border-box;
  font-size: 11.500px;
}
.sub-tab {
  width: 66px;
  display: flex;
  align-items: center;
  justify-content: center;
  color: #aaa;
  background: #e2e2e2;
  font-weight: 400;
}
.sub-tab.active {
  width: 64px;
  color: #333;
  background: #f0f0f0;
  font-weight: 700;
}
.list-toolbar {
  height: 26px;
  display: flex;
  align-items: center;
  padding-left: 6px;
  gap: 9px;
  background: #f2f2f2;
  border-bottom: 1px solid #ddd;
  box-sizing: border-box;
  font-size: 12.500px;
  white-space: nowrap;
}
.lt-item {
  display: flex;
  align-items: center;
  gap: 4px;
}
.lt-more {
  margin-left: auto;
  margin-right: 5px;
}
.list-search {
  height: 20px;
  display: flex;
  align-items: center;
  justify-content: space-between;
  padding: 0 4px 0 2px;
  color: #aaa;
  font-size: 11px;
  border-bottom: 1px solid #ddd;
}
.tree {
  position: relative;
  padding-top: 2px;
  background: #fff;
}
.tree-leaf {
  height: 24.300px;
  line-height: 24.300px;
  margin-left: 64px;
  font-size: 12px;
  color: #333;
}
.tree-leaf.selected {
  width: 47px;
  height: 20px;
  line-height: 20px;
  margin-top: 2px;
  margin-left: 61px;
  padding-left: 3px;
  box-sizing: border-box;
  background: #aec6e8;
}
.tree-group {
  height: 24.300px;
  display: flex;
  align-items: center;
  gap: 6px;
  padding-left: 31px;
  font-size: 11.500px;
  color: #333;
}
.tree-scroll {
  position: absolute;
  right: 5px;
  top: 87px;
  width: 8px;
  height: 113px;
  border-radius: 4px;
  background: #cfcfcf;
}
.panel-props {
  margin-top: 4px;
  flex: 1;
  min-height: 0;
  overflow: hidden;
  border-top: 0;
}
.props-head {
  height: 13px;
  background: #dcdcdc;
  display: flex;
  align-items: center;
  justify-content: flex-end;
  padding-right: 5px;
}
.prop-table {
  position: relative;
  width: 264px;
  display: grid;
  grid-template-columns: 22px 101px 141px;
  grid-auto-rows: 21.200px;
  font-size: 12px;
}
.cell {
  border-right: 1px solid #e4e4e4;
  border-bottom: 1px solid #e4e4e4;
  box-sizing: border-box;
  padding-left: 4px;
  display: flex;
  align-items: center;
  white-space: nowrap;
  overflow: hidden;
  color: #333;
}
.cell.head {
  background: #f0f0f0;
  justify-content: center;
  padding: 0;
  color: #666;
  font-size: 12px;
}
.cell.value-head {
  background: #68b0ee;
  color: #fff;
}
.cell.num {
  background: #f0f0f0;
  justify-content: center;
  padding: 0;
  color: #666;
}
.cell.name {
  padding-left: 3px;
  font-size: 12px;
}
.cell.link {
  color: #3a78e0;
}
.cell.val {
  padding-left: 4px;
}
.prop-scroll {
  position: absolute;
  left: 269px;
  top: 14px;
  width: 8px;
  height: 118px;
  border-radius: 4px;
  background: #cfcfcf;
}
.panel-splitter {
  position: absolute;
  left: 333px;
  top: 256px;
  width: 3px;
  height: 97px;
  background: #333;
}
.cad {
  display: block;
  margin-left: 3px;
  flex: none;
}
.cad-dim {
  font-size: 17px;
  fill: #cfcfcf;
  text-anchor: middle;
}
.cad-axis {
  font-size: 15px;
  fill: #d8d8d8;
  text-anchor: middle;
}
.cad-axis-top text {
  font-size: 11px;
  fill: #d8d8d8;
  text-anchor: middle;
}
.cad-note {
  font-size: 10px;
  fill: #c8c8c8;
}
.side {
  flex: 1;
  display: flex;
}
.side-shade {
  flex: 1;
  background: linear-gradient(90deg, #d2d3d3, #e6e7e7);
}
.vscroll {
  width: 12px;
  background: #eeefef;
  display: flex;
  flex-direction: column;
  align-items: center;
  padding-top: 3px;
  box-sizing: border-box;
}
.vthumb {
  width: 11px;
  height: 35px;
  margin-top: 425px;
  margin-bottom: 28px;
  background: #fff;
  border: 1px solid #bbb;
  border-radius: 5px;
  box-sizing: border-box;
}

/* ---- 状态栏 ---- */
.statusbar {
  height: 21px;
  flex: none;
  background: #f3f4f4;
  position: relative;
  display: flex;
  align-items: center;
  font-size: 11px;
  color: #666;
  white-space: nowrap;
}
.st-page {
  margin-left: 7px;
}
.st-words {
  margin-left: 11px;
}
.st-check {
  margin-left: 12px;
  display: flex;
  align-items: center;
  gap: 3px;
}
.st-proof {
  margin-left: 15px;
}
.st-compat {
  margin-left: 10px;
}
.st-right {
  position: absolute;
  left: 915px;
  top: 0;
  height: 21px;
  display: flex;
  align-items: center;
  gap: 8px;
}
.st-page-btn {
  width: 20px;
  height: 20px;
  margin-left: 9px;
  background: #c9c9c9;
  border-radius: 3px;
  display: flex;
  align-items: center;
  justify-content: center;
}
.st-pen {
  margin-left: 3px;
}
.st-crop {
  margin-left: 11px;
}
.st-zoom {
  margin-left: 2px;
}
.st-circle {
  position: absolute;
  left: 1226px;
  top: 3px;
  width: 12px;
  height: 12px;
  border: 1px solid #666;
  border-radius: 50%;
}
.st-full {
  position: absolute;
  left: 1310px;
  top: 4px;
}
.edge {
  height: 3px;
  flex: none;
  background: #25373f;
}

/* ---- 浮层 ---- */
.pen-bar {
  position: absolute;
  left: 42px;
  top: 130px;
  width: 36px;
  height: 385px;
  background: #e8e8e8;
  box-shadow: 1px 1px 4px rgba(0, 0, 0, 0.4);
}
.pen-title {
  height: 17px;
  margin-top: 3px;
  display: flex;
  font-size: 10px;
  color: #999;
  background: #f8f8f8;
}
.pen-title span {
  width: 18px;
  line-height: 17px;
  padding-left: 2px;
}
.pen-title i {
  flex: 1;
  background: #d4d4d4;
}
.pen-exit {
  margin-top: 2px;
  height: 17px;
  line-height: 15px;
  font-size: 10.500px;
  text-align: center;
  color: #222;
  background: #eee;
  border: 1px solid #666;
  box-sizing: border-box;
  margin-bottom: 2px;
}
.pen-a {
  font-size: 13px;
  text-anchor: middle;
  fill: #222;
}
.watermark {
  position: absolute;
  left: 1016px;
  top: 28px;
  display: flex;
  gap: 10px;
  color: #fff;
  pointer-events: none;
}
.wm-logo {
  flex: none;
  filter: drop-shadow(1px 1px 2px rgba(0, 0, 0, 0.4));
}
.wm-text {
  padding-top: 1px;
  margin-left: -5px;
}
.wm-cn {
  font-family: "Noto Sans CJK SC", sans-serif;
  font-size: 48px;
  line-height: 58px;
  font-weight: 400;
  text-shadow: 1px 1px 3px rgba(0, 0, 0, 0.4);
  white-space: nowrap;
}
.wm-en {
  font-size: 26px;
  line-height: 26px;
  margin-top: 1px;
  white-space: nowrap;
  color: #fff;
  text-shadow: 0 0 2px rgba(0, 0, 0, 0.15);
}
.dialog {
  position: absolute;
  left: 513px;
  top: 350px;
  width: 362px;
  height: 160px;
  background: #eff0f0;
  box-shadow: 0 0 1px #555;
  display: flex;
  flex-direction: column;
}
.dialog-head {
  height: 27px;
  flex: none;
  background: #2b7fdb;
  color: #dce9f8;
  font-size: 11px;
  display: flex;
  align-items: center;
  justify-content: space-between;
  padding: 0 10px 2px 8px;
  box-sizing: border-box;
}
.dialog-body {
  display: flex;
  gap: 11px;
  padding: 21px 0 0 24px;
  height: 89px;
  box-sizing: border-box;
  position: relative;
}
.dialog-body::after {
  content: "";
  position: absolute;
  left: 9px;
  right: 10px;
  bottom: 0;
  height: 1px;
  background: #d4d6d8;
}
.stray-dot {
  position: absolute;
  left: 349px;
  top: 35px;
  width: 2px;
  height: 2px;
  background: #555;
}
.q-icon {
  width: 30px;
  height: 30px;
  margin-top: 1px;
  border-radius: 50%;
  background: #217ad0;
  color: #fff;
  font-size: 22px;
  font-weight: 700;
  line-height: 30px;
  text-align: center;
}
.dialog-msg {
  font-size: 14px;
  color: #444;
  margin-top: -2px;
}
.dialog-msg p {
  margin: 0;
  line-height: 26px;
  white-space: nowrap;
}
.dialog-foot {
  flex: 1;
  display: flex;
  justify-content: flex-end;
  gap: 6px;
  padding: 8px 12px 0 0;
}
.dialog-foot button {
  width: 79px;
  height: 26px;
  border-radius: 2px;
  font-family: inherit;
  font-size: 12px;
  padding: 0;
}
.btn-yes {
  background: #3b8ff0;
  border: 0;
  color: #e8f2ff;
}
.btn-no {
  background: #fff;
  border: 1px solid #e2e2e2;
  color: #333;
}
.ink {
  position: absolute;
  left: 0;
  top: 0;
  pointer-events: none;
}
.recorder {
  position: absolute;
  left: 985px;
  top: 640px;
  width: 313px;
  height: 67px;
  background: #f3f5f6;
  box-shadow: 1px 1px 3px rgba(0, 0, 0, 0.7);
  display: flex;
  flex-direction: column;
}
.rec-head {
  height: 28px;
  flex: none;
  background: #1f2d3a;
  color: #d8dde2;
  display: flex;
  align-items: center;
  padding: 0 9px;
  font-size: 11px;
}
.rec-time {
  flex: 1;
  text-align: center;
  margin-right: 10px;
}
.rec-body {
  flex: 1;
  display: flex;
  align-items: center;
  padding-left: 11px;
}
.rec-stop {
  width: 18px;
  height: 18px;
  margin-left: 21px;
  border-radius: 4px;
  background: #dd6130;
}
.rec-div {
  width: 1px;
  height: 30px;
  margin-left: 10px;
  background: #e8e8e8;
}
.rec-line {
  margin: 18px 0 0 14px;
}
.rec-mark {
  margin: -4px 0 0 15px;
}
.rec-mark + .rec-div {
  margin-left: 4px;
}
.rec-web {
  margin-left: 7px;
}
.rec-caret {
  margin-left: 12px;
}
.rec-pen {
  margin-left: 12px;
}
</style>

<style>
html,
body {
  margin: 0;
  overflow: hidden;
}
</style>
